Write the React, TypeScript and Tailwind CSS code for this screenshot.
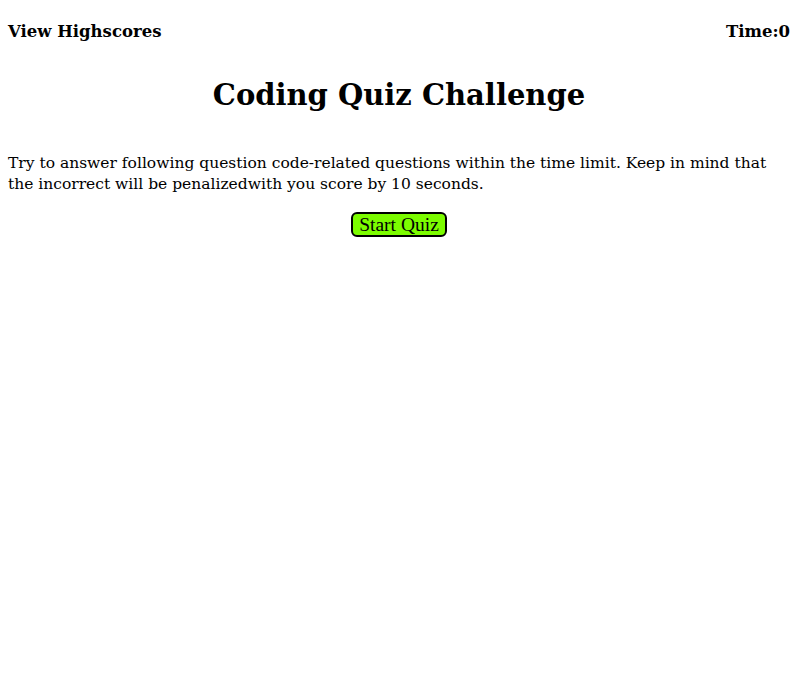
export default function App() {
  return (
    <main className="min-h-[692px] bg-white px-2 font-['DejaVu_Serif',serif] text-black">
      <header className="flex justify-between pt-[21px] text-[16.5px] font-bold leading-[22px]">
        <span>View Highscores</span>
        <span>Time:0</span>
      </header>

      <h1 className="mt-[34px] text-center text-[29px] font-bold leading-[36px]">
        Coding Quiz Challenge
      </h1>

      <p className="mt-[40px] text-[15.5px] leading-[21px]">
        Try to answer following question code-related questions within the time limit. Keep in mind
        that the incorrect will be penalizedwith you score by 10 seconds.
      </p>

      <div className="mt-[17px] flex justify-center">
        <button className="rounded-[6px] border-2 border-black bg-[#7cfc00] px-[6px] font-['Liberation_Serif',serif] text-[19.5px] leading-[21px]">
          Start Quiz
        </button>
      </div>
    </main>
  );
}
